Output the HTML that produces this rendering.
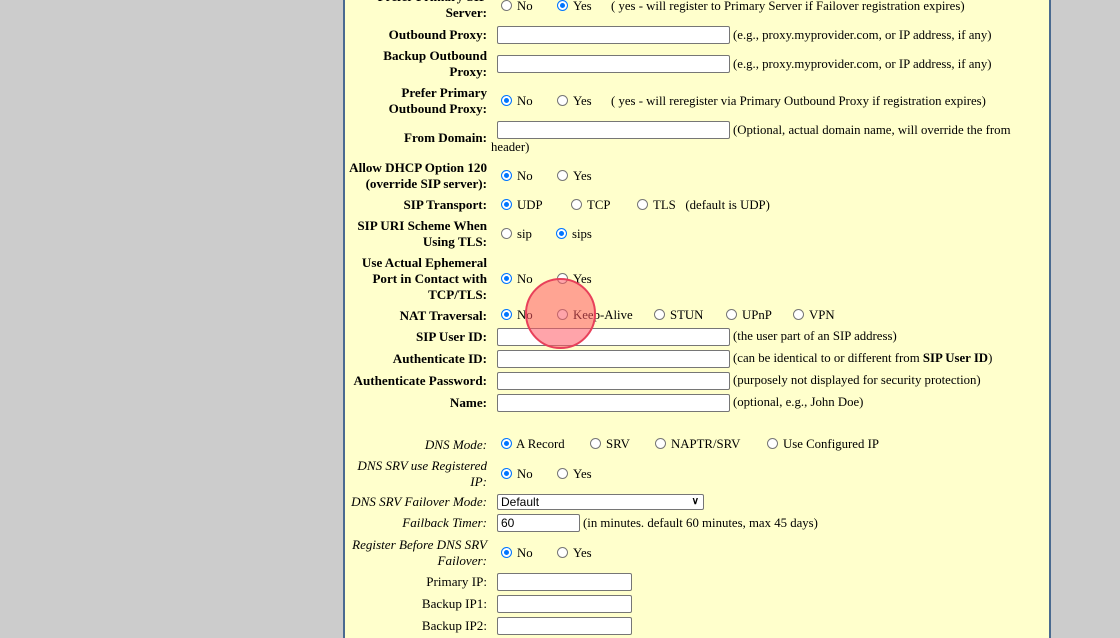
<!DOCTYPE html><html><head><meta charset="utf-8"><style>
body{margin:0;width:1120px;height:626px;background:#cccccc;overflow:hidden;position:relative;font-family:"Liberation Serif",serif;font-size:13px;color:#000}
#p{position:absolute;left:343px;top:-2px;width:704px;height:640px;background:#ffffcc;border-left:2px solid #4a6a90;border-right:2px solid #4a6a90}
.l{position:absolute;left:287px;width:200px;text-align:right;font-weight:bold;line-height:16px;white-space:nowrap;font-size:13.1px}
.i{font-weight:normal;font-style:italic}
.n{font-weight:normal}
.t{position:absolute;line-height:18px;white-space:nowrap;font-size:12.8px}
.r{position:absolute;width:9px;height:9px;border:1px solid #767676;border-radius:50%;background:#fff}
.r.c{border:1px solid #0075ff;background:#fff;box-shadow:inset 0 0 0 2px #fff,inset 0 0 0 6px #0075ff}
.in{position:absolute;height:16px;border:1px solid #767676;border-radius:2px;background:#fff;box-sizing:border-box;font-family:"Liberation Sans",sans-serif;font-size:12px;line-height:14px;padding-left:3px}
#circ{position:absolute;left:525px;top:278px;width:67px;height:67px;border-radius:50%;background:rgba(255,90,100,.55);border:2px solid #e8405a}
</style></head><body>
<div id="p"></div>

<div class="l" style="top:-11px">Prefer Primary SIP<br>Server:</div>
<span class="r" style="left:501px;top:0px"></span><span class="t" style="left:517px;top:-3px">No</span>
<span class="r c" style="left:557px;top:0px"></span><span class="t" style="left:573px;top:-3px">Yes</span>
<span class="t" style="left:611px;top:-3px">( yes - will register to Primary Server if Failover registration expires)</span>

<div class="l" style="top:27px">Outbound Proxy:</div>
<div class="in" style="left:497px;top:26px;width:233px;height:18px"></div>
<span class="t" style="left:733px;top:26px">(e.g., proxy.myprovider.com, or IP address, if any)</span>

<div class="l" style="top:48px">Backup Outbound<br>Proxy:</div>
<div class="in" style="left:497px;top:55px;width:233px;height:18px"></div>
<span class="t" style="left:733px;top:55px">(e.g., proxy.myprovider.com, or IP address, if any)</span>

<div class="l" style="top:85px">Prefer Primary<br>Outbound Proxy:</div>
<span class="r c" style="left:501px;top:95px"></span><span class="t" style="left:517px;top:92px">No</span>
<span class="r" style="left:557px;top:95px"></span><span class="t" style="left:573px;top:92px">Yes</span>
<span class="t" style="left:611px;top:92px">( yes - will reregister via Primary Outbound Proxy if registration expires)</span>

<div class="l" style="top:130px">From Domain:</div>
<div class="in" style="left:497px;top:121px;width:233px;height:18px"></div>
<span class="t" style="left:733px;top:121px">(Optional, actual domain name, will override the from</span>
<span class="t" style="left:491px;top:138px">header)</span>

<div class="l" style="top:160px">Allow DHCP Option 120<br>(override SIP server):</div>
<span class="r c" style="left:501px;top:170px"></span><span class="t" style="left:517px;top:167px">No</span>
<span class="r" style="left:557px;top:170px"></span><span class="t" style="left:573px;top:167px">Yes</span>

<div class="l" style="top:197px">SIP Transport:</div>
<span class="r c" style="left:501px;top:199px"></span><span class="t" style="left:517px;top:196px">UDP</span>
<span class="r" style="left:571px;top:199px"></span><span class="t" style="left:587px;top:196px">TCP</span>
<span class="r" style="left:637px;top:199px"></span><span class="t" style="left:653px;top:196px">TLS &nbsp; (default is UDP)</span>

<div class="l" style="top:218px">SIP URI Scheme When<br>Using TLS:</div>
<span class="r" style="left:501px;top:228px"></span><span class="t" style="left:517px;top:225px">sip</span>
<span class="r c" style="left:556px;top:228px"></span><span class="t" style="left:572px;top:225px">sips</span>

<div class="l" style="top:255px">Use Actual Ephemeral<br>Port in Contact with<br>TCP/TLS:</div>
<span class="r c" style="left:501px;top:273px"></span><span class="t" style="left:517px;top:270px">No</span>
<span class="r" style="left:557px;top:273px"></span><span class="t" style="left:573px;top:270px">Yes</span>

<div class="l" style="top:308px">NAT Traversal:</div>
<span class="r c" style="left:501px;top:309px"></span><span class="t" style="left:517px;top:306px">No</span>
<span class="r" style="left:557px;top:309px"></span><span class="t" style="left:573px;top:306px">Keep-Alive</span>
<span class="r" style="left:654px;top:309px"></span><span class="t" style="left:670px;top:306px">STUN</span>
<span class="r" style="left:726px;top:309px"></span><span class="t" style="left:742px;top:306px">UPnP</span>
<span class="r" style="left:793px;top:309px"></span><span class="t" style="left:809px;top:306px">VPN</span>

<div class="l" style="top:329px">SIP User ID:</div>
<div class="in" style="left:497px;top:328px;width:233px;height:18px"></div>
<span class="t" style="left:733px;top:327px">(the user part of an SIP address)</span>

<div class="l" style="top:351px">Authenticate ID:</div>
<div class="in" style="left:497px;top:350px;width:233px;height:18px"></div>
<span class="t" style="left:733px;top:349px">(can be identical to or different from <b>SIP User ID</b>)</span>

<div class="l" style="top:373px">Authenticate Password:</div>
<div class="in" style="left:497px;top:372px;width:233px;height:18px"></div>
<span class="t" style="left:733px;top:371px">(purposely not displayed for security protection)</span>

<div class="l" style="top:395px">Name:</div>
<div class="in" style="left:497px;top:394px;width:233px;height:18px"></div>
<span class="t" style="left:733px;top:393px">(optional, e.g., John Doe)</span>

<div class="l i" style="top:437px">DNS Mode:</div>
<span class="r c" style="left:501px;top:438px"></span><span class="t" style="left:516px;top:435px">A Record</span>
<span class="r" style="left:590px;top:438px"></span><span class="t" style="left:606px;top:435px">SRV</span>
<span class="r" style="left:655px;top:438px"></span><span class="t" style="left:671px;top:435px">NAPTR/SRV</span>
<span class="r" style="left:767px;top:438px"></span><span class="t" style="left:783px;top:435px">Use Configured IP</span>

<div class="l i" style="top:458px">DNS SRV use Registered<br>IP:</div>
<span class="r c" style="left:501px;top:468px"></span><span class="t" style="left:517px;top:465px">No</span>
<span class="r" style="left:557px;top:468px"></span><span class="t" style="left:573px;top:465px">Yes</span>

<div class="l i" style="top:494px">DNS SRV Failover Mode:</div>
<div class="in" style="left:497px;top:494px;width:207px">Default<span style="position:absolute;right:4px;top:0;font-size:10px;font-weight:bold">&#x2228;</span></div>

<div class="l i" style="top:515px">Failback Timer:</div>
<div class="in" style="left:497px;top:514px;width:83px;height:18px;line-height:16px">60</div>
<span class="t" style="left:583px;top:514px">(in minutes. default 60 minutes, max 45 days)</span>

<div class="l i" style="top:537px">Register Before DNS SRV<br>Failover:</div>
<span class="r c" style="left:501px;top:547px"></span><span class="t" style="left:517px;top:544px">No</span>
<span class="r" style="left:557px;top:547px"></span><span class="t" style="left:573px;top:544px">Yes</span>

<div class="l n" style="top:574px">Primary IP:</div>
<div class="in" style="left:497px;top:573px;width:135px;height:18px"></div>
<div class="l n" style="top:596px">Backup IP1:</div>
<div class="in" style="left:497px;top:595px;width:135px;height:18px"></div>
<div class="l n" style="top:618px">Backup IP2:</div>
<div class="in" style="left:497px;top:617px;width:135px;height:18px"></div>

<div id="circ"></div>
</body></html>
